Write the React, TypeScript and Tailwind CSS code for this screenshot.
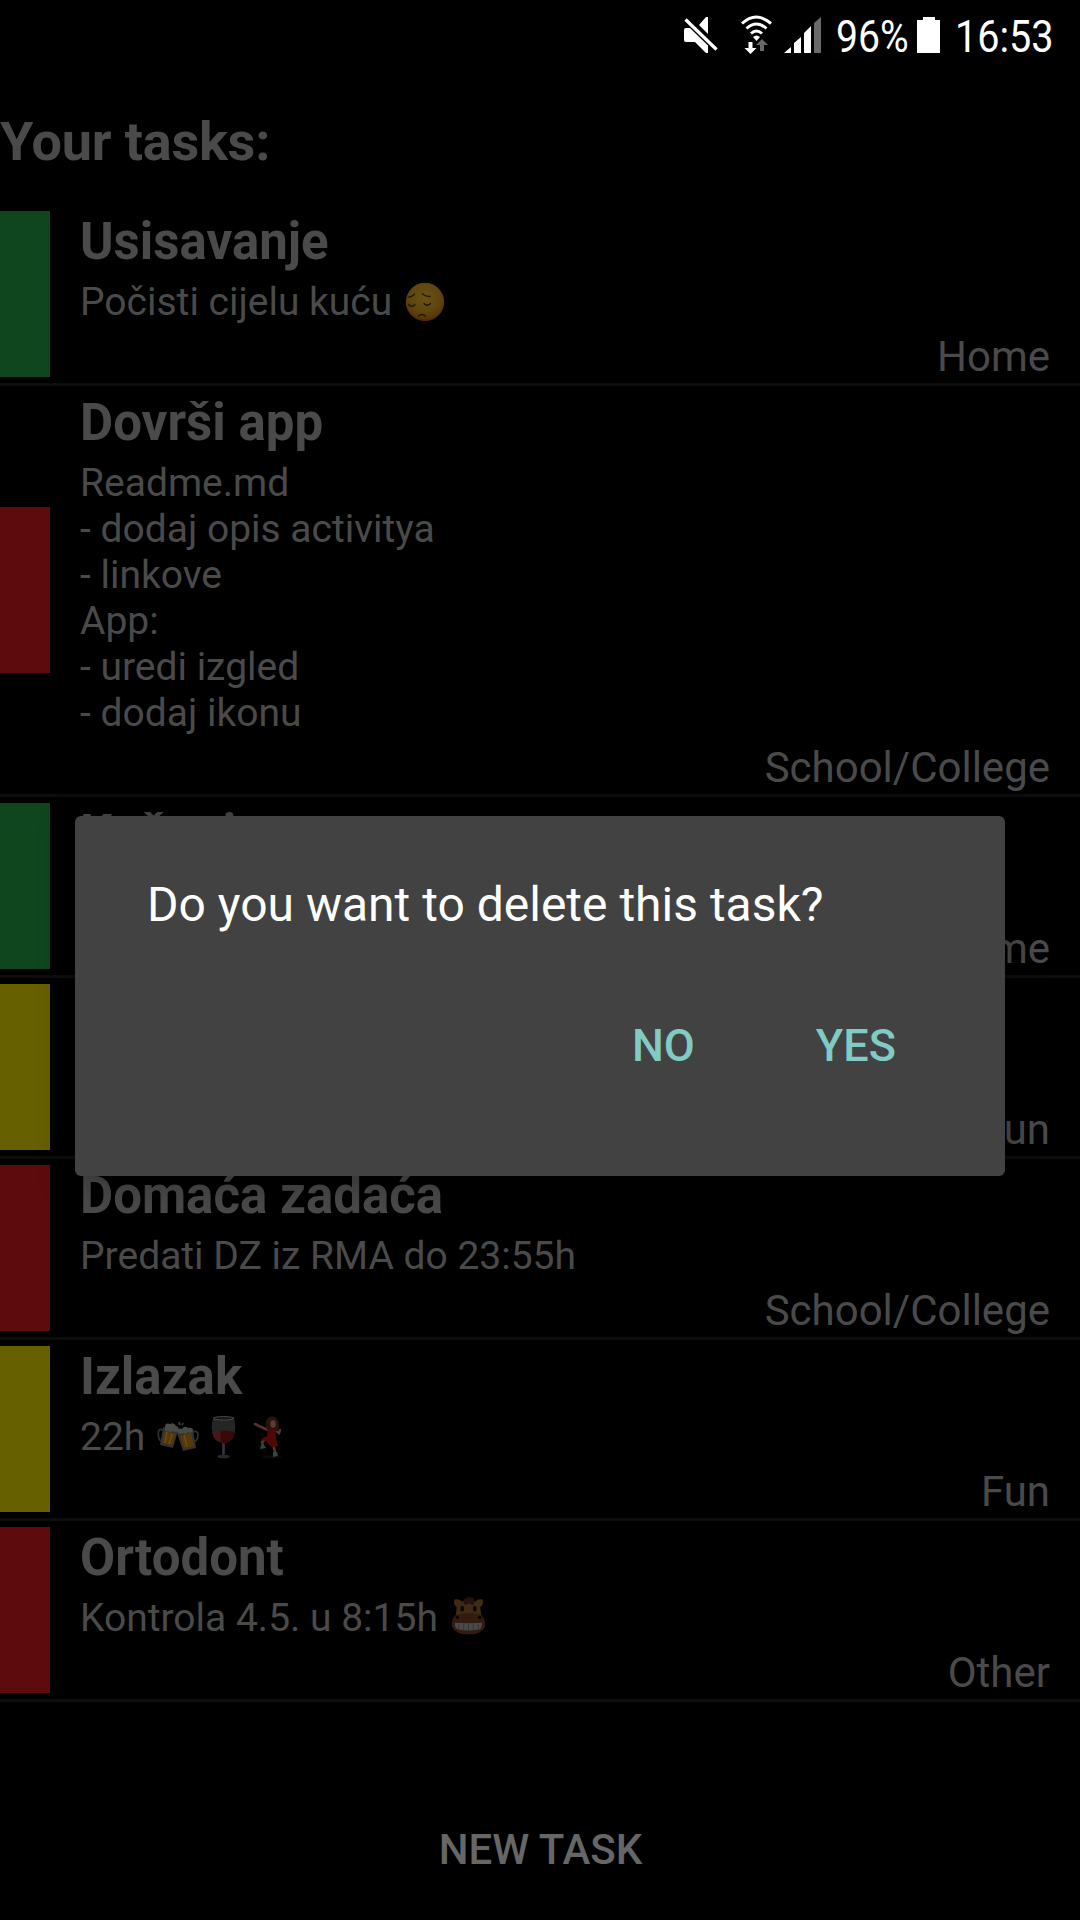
import React from "react";

type Task = {
  title: string;
  body: React.ReactNode;
  category: string;
  color: string;
  tall?: boolean;
};

function PensiveFace() {
  return (
    <svg className="mt-[3px] ml-[13px] h-[40px] w-[40px]" viewBox="0 0 40 40">
      <defs>
        <radialGradient id="face" cx="50%" cy="38%" r="62%">
          <stop offset="0" stopColor="#675214" />
          <stop offset="0.6" stopColor="#604610" />
          <stop offset="0.85" stopColor="#5b390b" />
          <stop offset="1" stopColor="#4b2406" />
        </radialGradient>
      </defs>
      <circle cx="20" cy="20" r="19.2" fill="url(#face)" />
      <g fill="none" stroke="#201703" strokeWidth="1.3" strokeLinecap="round">
        <path d="M4 15q4-.5 5.500-3" />
        <path d="M17.500 11.500q2 3 7.500 3" />
        <path d="M3.500 22.500q3.500 3.500 6.500 0" />
        <path d="M19 21.500q3 3.500 6.500 0" />
        <path d="M13.500 34q3.500-3 7 0" />
      </g>
    </svg>
  );
}

function Beers() {
  return (
    <svg className="h-[30px] w-[42px]" viewBox="0 0 42 30">
      <g fill="none" stroke="#2f2f31" strokeWidth="1.800">
        <path d="M6 8Q1 6 1.300 12q.2 7 3.500 7" />
        <path d="M36 10q5-2 5 3 0 5-4 7" />
      </g>
      <path d="M6 5l15 4-5 17L3 23z" fill="#343230" />
      <path d="M8 9l11 3-4 11-10-2z" fill="#573808" />
      <path d="M10 10l-2 11M15 12l-3 10" stroke="#70501a" strokeWidth="1.200" />
      <path d="M20 11l16-4 3 19-13 3z" fill="#343230" />
      <path d="M23 14l11-3 3 13-10 2z" fill="#573808" />
      <path d="M27 13l3 12" stroke="#70501a" strokeWidth="1.200" />
      <path d="M8 5q0-5 5-3 4-2 6 2 4 1 2 5-3 2-5 0-2 2-5 0-4 1-3-4z" fill="#4a4a49" />
      <path d="M20 10q1-5 5-3 3-4 6-1 5-1 5 3-2 3-5 1-2 3-5 1-4 2-6-1z" fill="#4a4a49" />
      <path d="M22 0l1 3M26 1l-1 2" stroke="#444" strokeWidth="1.500" />
    </svg>
  );
}

function Wine() {
  return (
    <svg className="ml-[12px] h-[43px] w-[25px]" viewBox="0 0 25 43">
      <path d="M2 2Q-1 14 3 22q3 4 8 5v11h3V27q5-1 8-5 4-8 1-20z" fill="#252526" />
      <path d="M1.500 16q11-3 22 0 0 9-10 11-11-1-12-11z" fill="#3c0709" />
      <path d="M1.500 16q6-2 8-1v11q-7-2-8-10z" fill="#54282b" opacity=".5" />
      <ellipse cx="12.500" cy="2.300" rx="10.500" ry="1.700" fill="#161616" stroke="#48484a" />
      <path d="M12.500 28v11" stroke="#363638" strokeWidth="2" />
      <ellipse cx="12.500" cy="40.500" rx="6.500" ry="1.800" fill="#29292b" />
    </svg>
  );
}

function Dancer() {
  return (
    <svg className="ml-[17px] h-[43px] w-[30px]" viewBox="0 0 30 43">
      <ellipse cx="19" cy="41" rx="10" ry="1.500" fill="#0b0b0b" />
      <path
        d="M15 14L6 10 2 8M23 15l3 2 1-3M13 23l-4 3 1 4M20 28l2 8"
        fill="none"
        stroke="#50352e"
        strokeWidth="2.600"
        strokeLinecap="round"
      />
      <path d="M15 2q7-4 10 3 2 6 0 10-4 1-5-2l-6 1q-3-8 1-12z" fill="#29130e" />
      <ellipse cx="20" cy="8" rx="2.800" ry="3.800" fill="#593d34" />
      <path d="M15 13q4-1 7 0l1 9 2 8q-5 2-8 0l-4-5-5-1q2-3 6-4z" fill="#510608" />
      <path d="M8 29l4 1 1 2-6 1zM20 36h4l1 4-5 1z" fill="#2a4845" />
    </svg>
  );
}

function Horse() {
  return (
    <svg className="ml-[13px] h-[40px] w-[35px]" viewBox="0 0 36 40">
      <path d="M6 12Q2 9 3.500 4q5-1 7.500 2 7-3 14 0 2.500-3 7.500-2 1.500 5-2.500 8l1.500 11h-27z" fill="#3f2b14" />
      <path d="M13 8q-1-5 3-5 2-3 4-1 5 0 4 6l-2 2-4-2-3 2z" fill="#25120b" />
      <path d="M5 20q13-4 26 0 5 4 4 12-4 8-17 8T1 32q-1-9 4-12z" fill="#331b0f" />
      <path d="M4 28q14 1 28 0 0 7-4 7-10 2-20 0-5-1-4-7z" fill="#4a4a4a" />
      <path d="M8 29v6M13 29v7M18 29v7M23 29v7M28 29v6" stroke="#303030" strokeWidth=".8" />
      <ellipse cx="11.500" cy="13.500" rx="1.800" ry="3" fill="#080808" />
      <ellipse cx="24.500" cy="13.500" rx="1.800" ry="3" fill="#080808" />
      <circle cx="6.500" cy="22.500" r="1.700" fill="#0a0502" />
      <circle cx="29.500" cy="22.500" r="1.700" fill="#0a0502" />
    </svg>
  );
}

const tasks: Task[] = [
  { title: "Usisavanje", body: <>Počisti cijelu kuću<PensiveFace /></>, category: "Home", color: "bg-[#0f461e]" },
  {
    title: "Dovrši app",
    body: "Readme.md\n- dodaj opis activitya\n- linkove\nApp:\n- uredi izgled\n- dodaj ikonu",
    category: "School/College",
    color: "bg-[#5e0b0e]",
    tall: true,
  },
  { title: "Košenje", body: "", category: "Home", color: "bg-[#0f461e]" },
  { title: "", body: "", category: "Fun", color: "bg-[#666000]" },
  { title: "Domaća zadaća", body: "Predati DZ iz RMA do 23:55h", category: "School/College", color: "bg-[#5e0b0e]" },
  {
    title: "Izlazak",
    body: <>22h<span className="ml-[12px] flex items-center"><Beers /><Wine /><Dancer /></span></>,
    category: "Fun",
    color: "bg-[#666000]",
  },
  { title: "Ortodont", body: <>Kontrola 4.5. u 8:15h<Horse /></>, category: "Other", color: "bg-[#5e0b0e]" },
];

function TaskRow({ task }: { task: Task }) {
  return (
    <li className={`flex items-center border-b-[3px] border-[#0d0d0d] ${task.tall ? "h-[411px]" : "h-[181px]"}`}>
      <div className={`h-[166px] w-[50px] shrink-0 ${task.color}`} />
      <div className="flex h-full grow flex-col pr-[30px] pl-[30px]">
        <h2 className="mt-[7px] h-[60px] shrink-0 text-[51px] leading-[60px] font-bold">{task.title}</h2>
        <div
          className={`mt-[7px] flex shrink-0 text-[39px] leading-[46px] whitespace-pre ${task.tall ? "h-[276px]" : "h-[46px]"}`}
        >
          {task.body}
        </div>
        <p className="mt-[7px] text-right text-[42px] leading-[49px]">{task.category}</p>
      </div>
    </li>
  );
}

function StatusBar() {
  return (
    <header className="flex h-[72px] text-white">
      <svg className="mt-[17px] ml-[684px] h-[36px] w-[34px] shrink-0" viewBox="0 0 34 36" fill="#fff">
        <path d="M0 13q0-2 2-2h7l15 14v11h-2L11 25H2q-2 0-2-2z" />
        <path d="M15 8l7-8h2v17z" />
        <path d="M1.500 2.500l31 30" stroke="#000" strokeWidth="6" />
        <path d="M1.500 2.500l31 30" stroke="#fff" strokeWidth="3.200" />
      </svg>
      <svg className="mt-[15px] ml-[22px] h-[39px] w-[34px] shrink-0" viewBox="0 0 34 39" fill="none">
        <g stroke="#fff" strokeWidth="3">
          <path d="M2 8.500q14-13 29 0" />
          <path d="M6.500 13.500q10-9 20 0" />
          <path d="M11 18.500q5.500-5 11 0" />
        </g>
        <path d="M13 22q3.500-3 7 0l-3.500 4z" fill="#fff" />
        <path d="M8.500 27h4v6h4l-6 6-6-6h4z" fill="#fff" />
        <path d="M20 36v-6h-4l6-6 6 6h-4v6z" fill="#696969" />
      </svg>
      <svg className="mt-[17px] ml-[10px] h-[36px] w-[38px] shrink-0" viewBox="0 0 38 36" fill="#fff">
        <path d="M0 36l7-6v6zM10 26l7-6v16h-7zM20 16l7-7v27h-7z" />
        <path d="M30 6l7-6v36h-7z" fill="#696969" />
      </svg>
      <span className="mt-[12px] ml-[14px] w-[72px] origin-left scale-x-[0.87] text-[45px] leading-[50px] whitespace-nowrap">
        96%
      </span>
      <svg className="mt-[17px] ml-[9px] h-[36px] w-[23px] shrink-0" viewBox="0 0 23 36" fill="#fff">
        <path d="M6 0h12v3h5v33H0V3h6z" />
      </svg>
      <span className="mt-[12px] ml-[15px] origin-left scale-x-[0.88] text-[45px] leading-[50px] whitespace-nowrap">
        16:53
      </span>
    </header>
  );
}

export default function App() {
  return (
    <div className="relative flex h-[1920px] w-[1080px] flex-col overflow-hidden bg-black font-['Roboto',sans-serif] text-[#4a4a4a]">
      <StatusBar />
      <h1 className="mt-[38px] h-[95px] text-[54px] leading-[63px] font-bold tracking-[-0.2px]">Your tasks:</h1>
      <ul>
        {tasks.map((task, i) => (
          <TaskRow key={i} task={task} />
        ))}
      </ul>
      <button className="mt-[123px] ml-[1px] self-center text-[42px] leading-[49px] font-medium text-[#666]">NEW TASK</button>
      <div
        role="dialog"
        className="absolute top-[816px] left-[75px] flex h-[360px] w-[930px] flex-col rounded-[6px] bg-[#424242] shadow-[0_6px_36px_rgba(0,0,0,0.35)]"
      >
        <p className="mt-[61px] ml-[72px] text-[48px] leading-[56px] text-white">Do you want to delete this task?</p>
        <div className="mt-[86px] mr-[109px] flex justify-end gap-[121px] text-[45px] leading-[53px] font-medium text-[#80cbc4]">
          <button>NO</button>
          <button>YES</button>
        </div>
      </div>
    </div>
  );
}
